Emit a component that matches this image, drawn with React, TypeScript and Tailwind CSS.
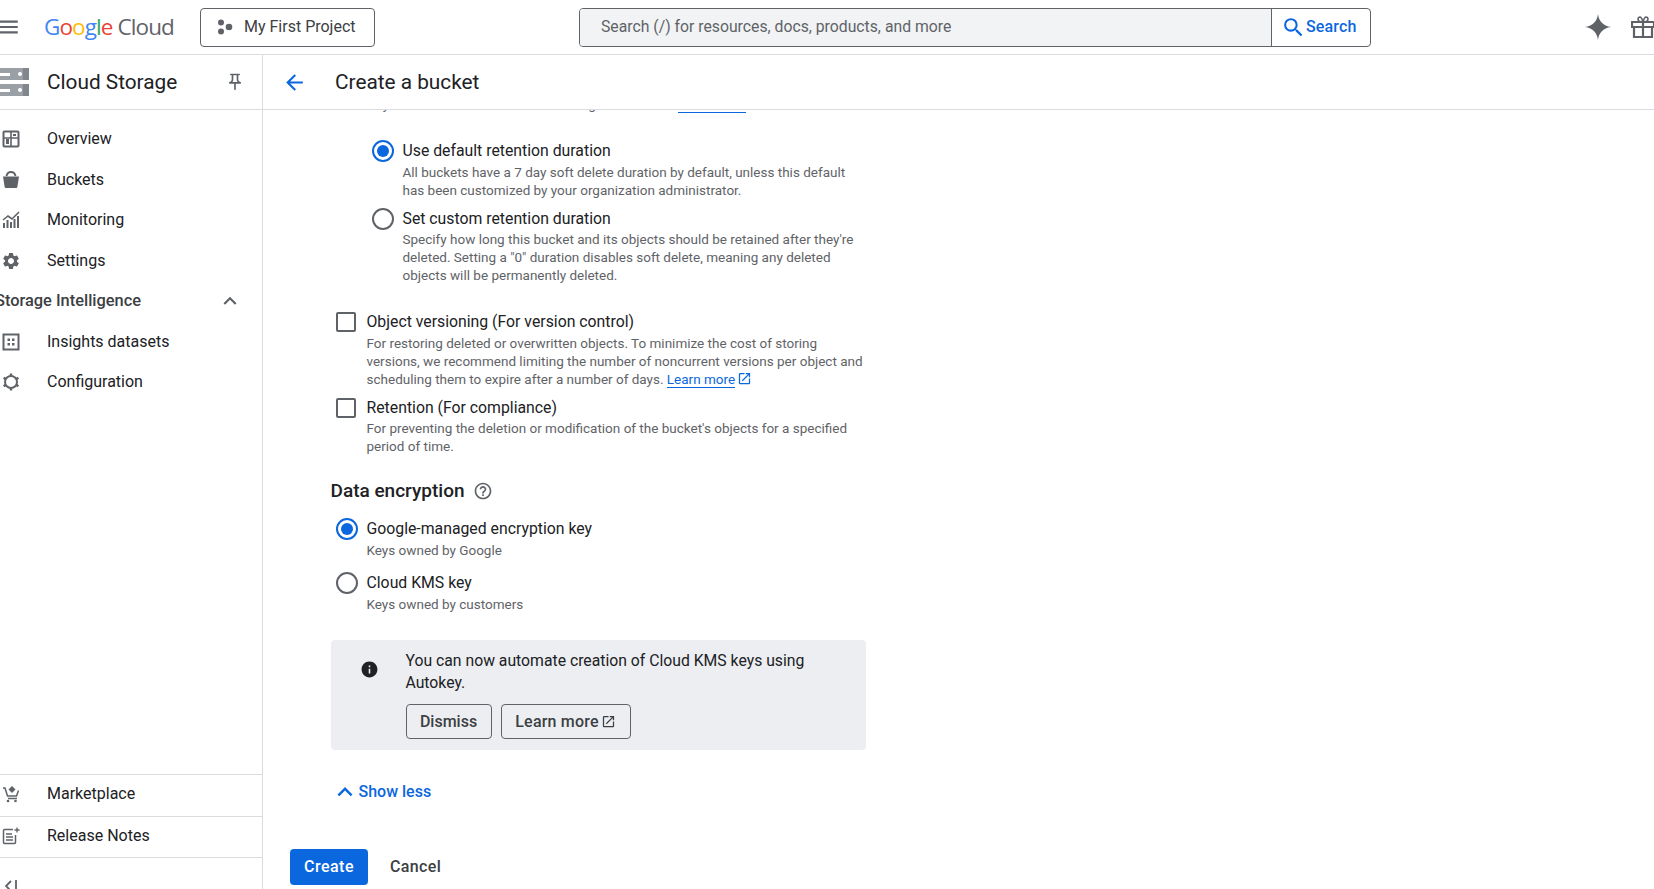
import React from 'react';
import {
  MdArrowBack,
  MdExpandLess,
  MdHelpOutline,
  MdInfo,
  MdMenu,
  MdOpenInNew,
  MdOutlinePushPin,
  MdSearch,
  MdSettings,
} from 'react-icons/md';

const ICON = '#5f6368';

const OverviewIcon = () => (
  <svg width="18" height="18" viewBox="0 0 18 18" fill="none" stroke={ICON} strokeWidth="2">
    <rect x="1.5" y="1.5" width="15" height="15" rx="1" />
    <path d="M9 2v14M9 8h7M2 8h7" strokeWidth="1.6" />
    <path d="M4 9h3v5H4zM11 4h3v2h-3z" fill={ICON} stroke="none" />
  </svg>
);

const BucketIcon = () => (
  <svg width="18" height="18" viewBox="0 0 18 18" fill={ICON}>
    <path d="M1 5.5h16l-1.6 10.2c-.1.7-.7 1.3-1.5 1.3H4.1c-.8 0-1.4-.6-1.5-1.3z" />
    <path d="M4.5 5C5 2.6 6.600 1 9 1s4 1.600 4.500 4" fill="none" stroke={ICON} strokeWidth="2" />
  </svg>
);

const MonitoringIcon = () => (
  <svg width="18" height="18" viewBox="0 0 18 18" fill="none" stroke={ICON}>
    <path d="M1 9l5-4 4 3 7-7" strokeWidth="1.6" />
    <path d="M2 17v-5M5.500 17V9M9 17v-6M12.500 17V8M16 17V5" strokeWidth="2" />
  </svg>
);

const InsightsIcon = () => (
  <svg width="18" height="18" viewBox="0 0 18 18" fill="none" stroke={ICON} strokeWidth="2">
    <rect x="1.500" y="1.500" width="15" height="15" />
    <path d="M5.500 5.500h2.500v2.500H5.500zM10 5.500h2.500v2.500H10zM5.500 10h2.500v2.500H5.500zM10 10h2.500v2.500H10z" fill={ICON} stroke="none" />
  </svg>
);

const ConfigIcon = () => (
  <svg width="18" height="18" viewBox="0 0 18 18" fill="none" stroke={ICON}>
    <circle cx="9" cy="9" r="6" strokeWidth="2" />
    <path d="M9 .5v2.500M9 15v2.500M1.600 4.800l2.200 1.300M14.200 11.900l2.200 1.300M1.600 13.200l2.200-1.300M14.200 6.100l2.200-1.300" strokeWidth="2.400" />
  </svg>
);

const MarketIcon = () => (
  <svg width="18" height="18" viewBox="0 0 18 18" fill="none" stroke={ICON} strokeWidth="1.500">
    <path d="M1 3h2l2.500 8h9l2-5.500" />
    <path d="M6 13.500h9" />
    <circle cx="6" cy="16" r="1.300" fill={ICON} stroke="none" />
    <circle cx="13.500" cy="16" r="1.300" fill={ICON} stroke="none" />
    <path d="M10 1l3.500 3.500L10 8 6.500 4.500z" fill={ICON} stroke="none" />
  </svg>
);

const NotesIcon = () => (
  <svg width="18" height="18" viewBox="0 0 18 18" fill="none" stroke={ICON} strokeWidth="1.500">
    <path d="M11 2.500H2.500a1 1 0 0 0-1 1v12a1 1 0 0 0 1 1h10a1 1 0 0 0 1-1V8" />
    <path d="M4 7h6M4 10h7M4 13h7" />
    <path d="M15 .5v5M12.500 3h5" strokeWidth="1.300" />
  </svg>
);

const NavRow = ({ icon, label }: { icon: React.ReactNode; label: string }) => (
  <div className="flex h-[40.5px] items-center">
    <span className="ml-[2px] flex w-[45px] shrink-0">{icon}</span>
    <span className="text-[16px] text-[#202124]">{label}</span>
  </div>
);

const Radio = ({ checked }: { checked?: boolean }) =>
  checked ? (
    <span className="-mt-[1px] flex h-[22px] w-[22px] shrink-0 items-center justify-center rounded-full border-2 border-[#0b67de]">
      <span className="h-[12px] w-[12px] rounded-full bg-[#0b67de]" />
    </span>
  ) : (
    <span className="-mt-[1px] h-[22px] w-[22px] shrink-0 rounded-full border-2 border-[#5f6368]" />
  );

const Checkbox = () => (
  <span className="flex w-[22px] shrink-0">
    <span className="h-[20px] w-[20px] rounded-[2px] border-2 border-[#5f6368]" />
  </span>
);

const Option = ({
  control,
  label,
  className,
  descClass,
  children,
}: {
  control: React.ReactNode;
  label: string;
  className?: string;
  descClass?: string;
  children: React.ReactNode;
}) => (
  <div className={`flex gap-[9px] ${className ?? ''}`}>
    {control}
    <div>
      <div className="text-[15.8px] leading-[20px] text-[#202124]">{label}</div>
      <div className={`text-[13.5px] leading-[18px] text-[#5f6368] ${descClass ?? 'mt-[2px] w-[502px]'}`}>{children}</div>
    </div>
  </div>
);

export default function App() {
  return (
    <div className="flex h-[889px] w-[1654px] flex-col overflow-hidden bg-white font-['Roboto',sans-serif]">
      {/* top bar */}
      <header className="flex h-[55px] shrink-0 items-center border-b border-[#dadce0]">
        <MdMenu size={26} color={ICON} className="-ml-[5px] shrink-0" />
        <div className="ml-[23px] w-[156px] shrink-0 whitespace-nowrap font-['Open_Sans',sans-serif] text-[22.5px] tracking-[-0.9px]">
          <span className="text-[#4285f4]">G</span>
          <span className="text-[#ea4335]">o</span>
          <span className="text-[#fbbc04]">o</span>
          <span className="text-[#4285f4]">g</span>
          <span className="text-[#34a853]">l</span>
          <span className="text-[#ea4335]">e</span>
          <span className="text-[#5f6368]"> Cloud</span>
        </div>
        <button className="flex h-[39px] w-[175px] shrink-0 items-center rounded-[4px] border border-[#5f6368] text-[16px] text-[#3c4043]">
          <svg width="16" height="16" viewBox="0 0 16 16" fill={ICON} className="ml-[16px] mr-[11px]">
            <circle cx="4" cy="3.500" r="3" />
            <circle cx="4" cy="12.500" r="3" />
            <circle cx="12" cy="8" r="3.300" />
          </svg>
          My First Project
        </button>
        <div className="ml-[204px] flex h-[39px] w-[792px] shrink-0 overflow-hidden rounded-[4px] border border-[#5f6368]">
          <div className="flex w-[692px] items-center border-r border-[#5f6368] bg-[#f1f3f4] pl-[21px] text-[15.75px] text-[#5f6368]">
            Search (/) for resources, docs, products, and more
          </div>
          <div className="flex flex-1 items-center pl-[10px] text-[16px] font-medium tracking-[0.15px] text-[#0b67de]">
            <MdSearch size={25} className="-ml-[1px]" />
            Search
          </div>
        </div>
        <svg width="28" height="28" viewBox="0 0 28 28" fill={ICON} className="ml-[213px] shrink-0">
          <path d="M14 1c1 7.500 5 11.800 13 13-8 1.200-12 5.500-13 13-1-7.500-5-11.800-13-13 8-1.200 12-5.500 13-13z" />
        </svg>
        <svg width="24" height="24" viewBox="0 0 24 24" fill="none" stroke={ICON} strokeWidth="2.200" className="ml-[19px] shrink-0">
          <path d="M1 7h22v5H1zM3 12v10h18V12M12 7v15" />
          <path d="M12 7C8 7 7 5.500 7 4s2-2.500 3-1.500S12 7 12 7zM12 7c4 0 5-1.500 5-3s-2-2.500-3-1.500S12 7 12 7z" strokeWidth="1.600" />
        </svg>
      </header>

      <div className="flex min-h-0 flex-1">
        {/* side nav */}
        <aside className="flex w-[263px] shrink-0 flex-col border-r border-[#dadce0]">
          <div className="flex h-[55px] shrink-0 items-center border-b border-[#dadce0]">
            <svg width="29" height="28" viewBox="0 0 29 28" className="shrink-0">
              <path d="M0 0h29v12H0zM0 16h29v12H0z" fill="#9aa0a6" />
              <path d="M23 0h6v12h-6zM23 16h6v12h-6z" fill="#80868b" />
              <path d="M0 5h10v3H0zM0 21h10v3H0z" fill="#fff" />
              <circle cx="20" cy="6" r="2" fill="#fff" />
              <circle cx="20" cy="22" r="2" fill="#fff" />
            </svg>
            <span className="ml-[18px] pt-[2px] text-[20.8px] text-[#202124]">Cloud Storage</span>
            <MdOutlinePushPin size={20} color={ICON} className="ml-auto mr-[17px]" />
          </div>
          <nav className="pt-[9px]">
            <NavRow icon={<OverviewIcon />} label="Overview" />
            <NavRow icon={<BucketIcon />} label="Buckets" />
            <NavRow icon={<MonitoringIcon />} label="Monitoring" />
            <NavRow icon={<MdSettings size={20} color={ICON} className="-ml-[1px]" />} label="Settings" />
            <div className="flex h-[40.5px] items-center justify-between pr-[19px]">
              <span className="-ml-[5px] text-[16.4px] font-medium text-[#3c4043]">Storage Intelligence</span>
              <MdExpandLess size={26} color={ICON} />
            </div>
            <NavRow icon={<InsightsIcon />} label="Insights datasets" />
            <NavRow icon={<ConfigIcon />} label="Configuration" />
          </nav>
          <div className="mt-auto">
            <div className="h-[42px] border-t border-[#dadce0]">
              <div className="-mt-[1px]">
                <NavRow icon={<MarketIcon />} label="Marketplace" />
              </div>
            </div>
            <div className="h-[41px] border-t border-[#dadce0]">
              <div className="-mt-[1px]">
                <NavRow icon={<NotesIcon />} label="Release Notes" />
              </div>
            </div>
            <div className="h-[32px] border-t border-[#dadce0] pl-[5px] pt-[22px]">
              <svg width="12" height="14" viewBox="0 0 12 14" fill="none" stroke={ICON} strokeWidth="1.800">
                <path d="M6 1L1 6l5 5M11 0v12" />
              </svg>
            </div>
          </div>
        </aside>

        {/* page */}
        <main className="flex min-w-0 flex-1 flex-col">
          <div className="relative z-10 flex h-[55px] shrink-0 items-center border-b border-[#dadce0] bg-white pl-[20px]">
            <MdArrowBack size={25} color="#0b67de" className="-ml-[1px]" />
            <h1 className="ml-[28px] pt-[2px] text-[20.8px] text-[#202124]">Create a bucket</h1>
          </div>
          <div className="min-h-0 flex-1 overflow-hidden pl-[27px]">
            <div className="-mt-[15px] ml-[40.5px]">
              <div className="ml-[36px] h-[18px] whitespace-nowrap text-[13.5px] leading-[18px] text-[#5f6368]">
                Any deleted files will be restored using the soft rule.{' '}
                <span className="border-b border-[#0b67de] text-[#0b67de]">Learn more</span>
              </div>

              <Option className="ml-[41px] mt-[28px]" descClass="mt-[2px] w-[460px]" control={<Radio checked />} label="Use default retention duration">
                All buckets have a 7 day soft delete duration by default, unless this default has been customized by your organization administrator.
              </Option>
              <Option className="ml-[41px] mt-[10px]" descClass="mt-[1px] w-[460px]" control={<Radio />} label="Set custom retention duration">
                Specify how long this bucket and its objects should be retained after they're deleted. Setting a "0" duration disables soft delete, meaning any deleted objects will be permanently deleted.
              </Option>

              <Option className="ml-[5px] mt-[28px]" control={<Checkbox />} label="Object versioning (For version control)">
                For restoring deleted or overwritten objects. To minimize the cost of storing versions, we recommend limiting the number of noncurrent versions per object and scheduling them to expire after a number of days.{' '}
                <span className="border-b border-[#0b67de] text-[#0b67de]">Learn more</span>
                <MdOpenInNew size={15} color="#0b67de" className="ml-[2px] inline align-[-2px]" />
              </Option>
              <Option className="ml-[5px] mt-[10px]" descClass="mt-[1px] w-[502px]" control={<Checkbox />} label="Retention (For compliance)">
                For preventing the deletion or modification of the bucket's objects for a specified period of time.
              </Option>

              <div className="mt-[24px] flex h-[24px] items-center text-[19px] font-medium text-[#202124]">
                Data encryption
                <MdHelpOutline size={20} color={ICON} className="ml-[8px]" />
              </div>

              <Option className="ml-[5px] mt-[16px]" control={<Radio checked />} label="Google-managed encryption key">
                Keys owned by Google
              </Option>
              <Option className="ml-[5px] mt-[14px]" control={<Radio />} label="Cloud KMS key">
                Keys owned by customers
              </Option>

              <div className="mt-[27px] flex h-[110px] w-[535px] rounded-[4px] bg-[#eceef2] pl-[29px] pt-[10px]">
                <MdInfo size={19} color="#202124" className="mt-[10px] shrink-0" />
                <div className="ml-[27px]">
                  <p className="w-[420px] text-[15.75px] leading-[22px] text-[#202124]">
                    You can now automate creation of Cloud KMS keys using Autokey.
                  </p>
                  <div className="mt-[10px] flex gap-[9px]">
                    <button className="h-[35px] w-[86px] rounded-[4px] border border-[#5f6368] text-[16px] font-medium text-[#3c4043]">
                      Dismiss
                    </button>
                    <button className="flex h-[35px] w-[130px] items-center justify-center rounded-[4px] border border-[#5f6368] text-[16px] font-medium tracking-[0.2px] text-[#3c4043]">
                      Learn more
                      <MdOpenInNew size={15} className="ml-[2px]" />
                    </button>
                  </div>
                </div>
              </div>

              <div className="mt-[32px] flex h-[20px] items-center text-[16px] font-medium text-[#0b67de]">
                <MdExpandLess size={30} className="-ml-[1px]" />
                <span className="-ml-[1px]">Show less</span>
              </div>
            </div>

            <div className="mt-[47px] flex items-center">
              <button className="h-[36px] w-[78px] rounded-[4px] bg-[#0b67de] text-[16px] font-medium tracking-[0.5px] text-white">
                Create
              </button>
              <button className="ml-[22px] text-[16px] font-medium tracking-[0.35px] text-[#3c4043]">Cancel</button>
            </div>
          </div>
        </main>
      </div>
    </div>
  );
}
